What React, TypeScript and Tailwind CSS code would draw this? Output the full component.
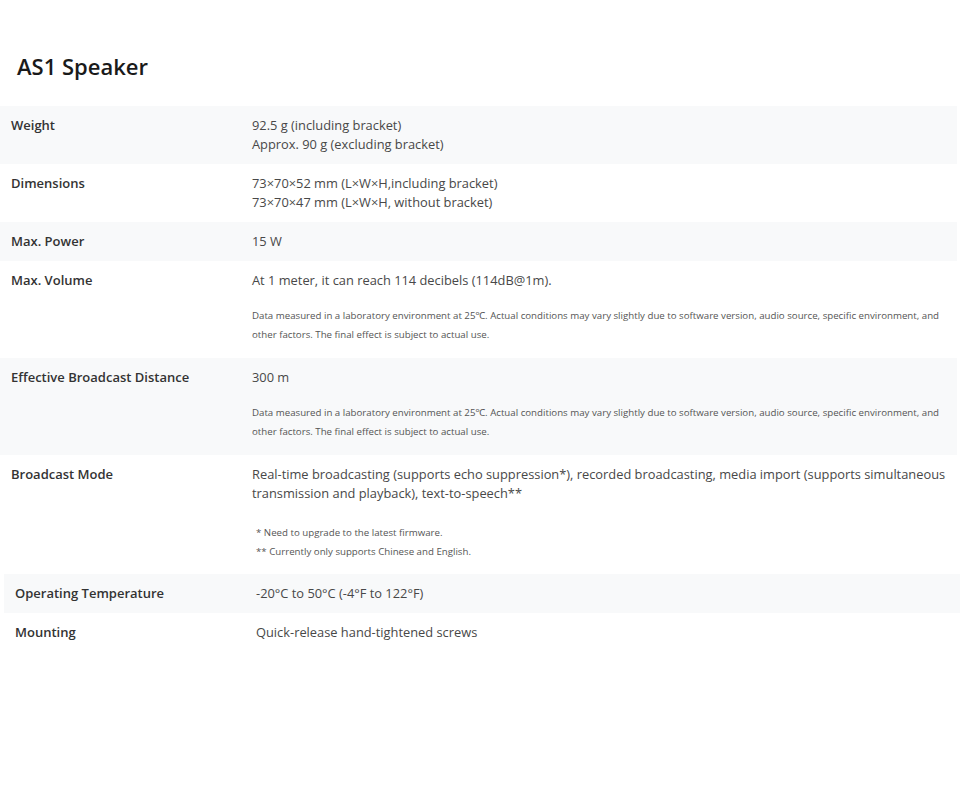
const specs = [
  { label: "Weight", value: ["92.5 g (including bracket)", "Approx. 90 g (excluding bracket)"] },
  { label: "Dimensions", value: ["73×70×52 mm (L×W×H,including bracket)", "73×70×47 mm (L×W×H, without bracket)"] },
  { label: "Max. Power", value: ["15 W"] },
  {
    label: "Max. Volume",
    value: ["At 1 meter, it can reach 114 decibels (114dB@1m)."],
    notes: [
      "Data measured in a laboratory environment at 25℃. Actual conditions may vary slightly due to software version, audio source, specific environment, and other factors. The final effect is subject to actual use.",
    ],
  },
  {
    label: "Effective Broadcast Distance",
    value: ["300 m"],
    notes: [
      "Data measured in a laboratory environment at 25℃. Actual conditions may vary slightly due to software version, audio source, specific environment, and other factors. The final effect is subject to actual use.",
    ],
  },
  {
    label: "Broadcast Mode",
    value: [
      "Real-time broadcasting (supports echo suppression*), recorded broadcasting, media import (supports simultaneous transmission and playback), text-to-speech**",
    ],
    notes: ["* Need to upgrade to the latest firmware.", "** Currently only supports Chinese and English."],
    indentNotes: true,
  },
];

const extra = [
  { label: "Operating Temperature", value: ["-20°C to 50°C (-4°F to 122°F)"] },
  { label: "Mounting", value: ["Quick-release hand-tightened screws"] },
];

type Spec = { label: string; value: string[]; notes?: string[]; indentNotes?: boolean };

function Row({ item, index }: { item: Spec; index: number }) {
  return (
    <div className={`flex py-[10px] ${index % 2 === 0 ? "bg-[#f8f9fa]" : "bg-white"}`}>
      <div className="w-[252px] shrink-0 pl-[11px] text-[13px] leading-[19px] font-semibold text-[#333]">
        {item.label}
      </div>
      <div className="flex-1">
        {item.value.map((v, i) => (
          <div key={i} className="text-[12.85px] leading-[19px] text-[#484848]">
            {v}
          </div>
        ))}
        {item.notes && (
          <div className={item.indentNotes ? "pl-[4px] mt-[20px] pb-[3px]" : "mt-[16px] pb-[4px]"}>
            {item.notes.map((n, i) => (
              <p key={i} className="text-[9.7px] leading-[19px] text-[#555]">
                {n}
              </p>
            ))}
          </div>
        )}
      </div>
    </div>
  );
}

export default function App() {
  return (
    <div className="min-h-screen bg-white" style={{ fontFamily: '"Open Sans", "Noto Sans", sans-serif' }}>
      <h1 className="pt-[51px] pl-[17px] text-[22px] leading-[31px] font-semibold text-[#1a1a1a]">AS1 Speaker</h1>

      <div className="mt-[24px] mr-[3px]">
        {specs.map((item, index) => (
          <Row key={item.label} item={item} index={index} />
        ))}
      </div>

      <div className="ml-[4px]">
        {extra.map((item, index) => (
          <Row key={item.label} item={item} index={index} />
        ))}
      </div>
    </div>
  );
}
